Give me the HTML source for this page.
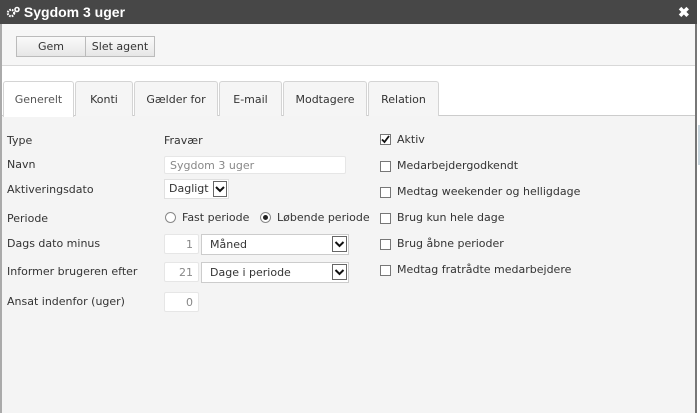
<!DOCTYPE html>
<html><head><meta charset="utf-8"><style>
*{box-sizing:border-box;margin:0;padding:0}
body{width:700px;height:413px;overflow:hidden;background:#fff;font-family:"DejaVu Sans","Liberation Sans",sans-serif;font-size:11px;color:#333;position:relative}
.a{position:absolute}
.dlg{left:0;top:0;width:697px;height:413px;background:#f4f4f4;border-left:2px solid #aaa;border-right:2px solid #777}
.title{left:0;top:0;width:697px;height:24px;background:#474747;color:#fff;font-weight:bold;font-size:14px;line-height:24px;padding-left:6px;font-family:"Liberation Sans",sans-serif}
.tb{left:2px;top:24px;width:693px;height:42px;background:#f6f6f6;border-bottom:1px solid #d8d8d8}
.btn{top:36px;height:21px;border:1px solid #bbb;background:linear-gradient(#fafafa,#e6e6e6);text-align:center;line-height:19px;font-size:11px;color:#333}
.wh{left:2px;top:66px;width:693px;height:50px;background:#fff;border-bottom:1px solid #ccc}
.tab{top:81px;height:35px;border:1px solid #d4d4d4;border-bottom:none;background:#f5f5f5;text-align:center;line-height:36px;font-size:11px;border-radius:3px 3px 0 0}
.lbl{left:7px;font-size:11px;color:#333}
.inp{background:#fff;border:1px solid #e6e6e6;font-size:11px;color:#888;border-radius:2px}
.sel{background:#fff;border:1px solid #ccc;font-size:11px;color:#333}
.arr{position:absolute;right:1px;top:1px;width:15px;height:16px;border:1px solid #666;background:#fff}
.cb{left:380px;width:11px;height:11px;border:1px solid #777;background:#fff}
.ct{left:397px;font-size:11px;color:#333}
</style></head><body>
<div class="a dlg"></div>
<div class="a title"><svg width="14" height="12" viewBox="0 0 14 12" style="vertical-align:-1px"><circle cx="5" cy="7" r="3.2" fill="none" stroke="#fff" stroke-width="2.2" stroke-dasharray="1.6 1"/><circle cx="11" cy="3.5" r="2" fill="none" stroke="#fff" stroke-width="1.6"/></svg> Sygdom 3 uger</div>
<div class="a" style="left:678px;top:4px;color:#fff;font-weight:bold;font-size:14px;font-family:'Liberation Sans',sans-serif">✖</div>
<div class="a tb"></div>
<div class="a btn" style="left:16px;width:70px">Gem</div>
<div class="a btn" style="left:85px;width:70px">Slet agent</div>
<div class="a wh"></div>
<div class="a tab" style="left:3px;width:71px;background:#fff;height:36px;color:#555">Generelt</div>
<div class="a tab" style="left:75px;width:58px">Konti</div>
<div class="a tab" style="left:134px;width:84px">Gælder for</div>
<div class="a tab" style="left:219px;width:63px">E-mail</div>
<div class="a tab" style="left:283px;width:84px">Modtagere</div>
<div class="a tab" style="left:368px;width:71px">Relation</div>

<div class="a lbl" style="top:134px">Type</div>
<div class="a" style="left:164px;top:134px">Fravær</div>
<div class="a lbl" style="top:158px">Navn</div>
<div class="a inp" style="left:164px;top:156px;width:182px;height:18px;padding:2px 5px">Sygdom 3 uger</div>
<div class="a lbl" style="top:183px">Aktiveringsdato</div>
<div class="a sel" style="left:164px;top:179px;width:65px;height:20px;padding:2px 4px;border-color:#e0e0e0">Dagligt<div class="arr" style="right:1px;top:1px;height:16px;width:14px"><svg width="12" height="14" viewBox="0 0 12 14"><path d="M2 5 L6 9 L10 5" fill="none" stroke="#111" stroke-width="2"/></svg></div></div>
<div class="a lbl" style="top:212px">Periode</div>
<div class="a" style="left:165px;top:212px;width:11px;height:11px;border:1px solid #888;border-radius:50%;background:#fff"></div>
<div class="a" style="left:182px;top:211px">Fast periode</div>
<div class="a" style="left:260px;top:212px;width:11px;height:11px;border:1px solid #888;border-radius:50%;background:#fff"><div style="margin:2px;width:5px;height:5px;border-radius:50%;background:#222"></div></div>
<div class="a" style="left:277px;top:211px">Løbende periode</div>

<div class="a lbl" style="top:237px">Dags dato minus</div>
<div class="a inp" style="left:164px;top:234px;width:35px;height:20px;text-align:right;padding:3px 5px">1</div>
<div class="a sel" style="left:201px;top:234px;width:148px;height:21px;padding:3px 8px;border-color:#ccc">Måned<div class="arr"><svg width="13" height="14" viewBox="0 0 13 14"><path d="M2.5 5 L6.5 9 L10.5 5" fill="none" stroke="#111" stroke-width="2"/></svg></div></div>
<div class="a lbl" style="top:265px">Informer brugeren efter</div>
<div class="a inp" style="left:164px;top:262px;width:35px;height:20px;text-align:right;padding:3px 5px">21</div>
<div class="a sel" style="left:201px;top:262px;width:148px;height:21px;padding:3px 8px;border-color:#ccc">Dage i periode<div class="arr"><svg width="13" height="14" viewBox="0 0 13 14"><path d="M2.5 5 L6.5 9 L10.5 5" fill="none" stroke="#111" stroke-width="2"/></svg></div></div>
<div class="a lbl" style="top:295px">Ansat indenfor (uger)</div>
<div class="a inp" style="left:164px;top:292px;width:35px;height:20px;text-align:right;padding:3px 5px">0</div>

<div class="a cb" style="top:134px"><svg width="9" height="9" viewBox="0 0 9 9" style="display:block"><path d="M1 4.5 L3.5 7 L8 1" fill="none" stroke="#111" stroke-width="1.8"/></svg></div>
<div class="a ct" style="top:133px">Aktiv</div>
<div class="a cb" style="top:161px"></div><div class="a ct" style="top:159px">Medarbejdergodkendt</div>
<div class="a cb" style="top:187px"></div><div class="a ct" style="top:185px">Medtag weekender og helligdage</div>
<div class="a cb" style="top:213px"></div><div class="a ct" style="top:211px">Brug kun hele dage</div>
<div class="a cb" style="top:239px"></div><div class="a ct" style="top:237px">Brug åbne perioder</div>
<div class="a cb" style="top:265px"></div><div class="a ct" style="top:263px">Medtag fratrådte medarbejdere</div>
<div class="a" style="left:698px;top:125px;width:2px;height:40px;background:#c9d6de"></div>
</body></html>
